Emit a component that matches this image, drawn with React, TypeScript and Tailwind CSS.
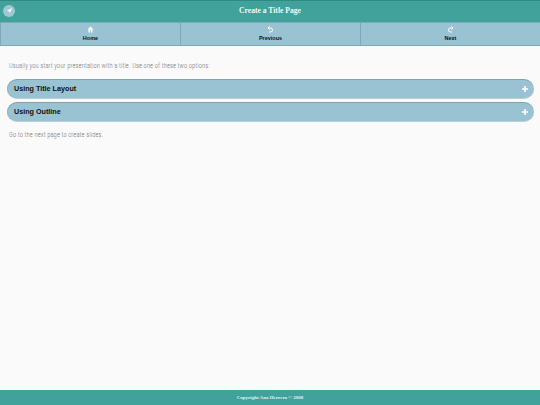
function Home() {
  return (
    <svg width="7" height="7" viewBox="0 0 14 14" fill="#fff" className="block">
      <path d="M7 1 1 7h2v6h3V9h2v4h3V7h2z" />
    </svg>
  );
}
function Undo() {
  return (
    <svg width="7" height="7" viewBox="0 0 14 14" fill="none" stroke="#fff" strokeWidth="2" className="block">
      <path d="M5 1 2 4l3 3M2 4h5a4 4 0 0 1 0 8H4" />
    </svg>
  );
}
function Redo() {
  return (
    <svg width="7" height="7" viewBox="0 0 14 14" fill="none" stroke="#fff" strokeWidth="2" className="block">
      <path d="M9 1l3 3-3 3M12 4H7a4 4 0 0 0 0 8h3" />
    </svg>
  );
}
function NavButton({ label, icon, border }: { label: string; icon: React.ReactNode; border?: boolean }) {
  return (
    <div className={`flex-1 flex flex-col items-center pt-[2px] ${border ? "border-l border-[#7fa9b8]" : ""}`}>
      <div className="h-[8px] flex items-center">{icon}</div>
      <div className="text-[5.5px] leading-[9px] mt-[1px] font-bold text-[#111] font-['Liberation_Sans',sans-serif]">{label}</div>
    </div>
  );
}
function Row({ label }: { label: string }) {
  return (
    <div className="h-[20px] rounded-[10px] bg-[#99c3d3] border-t border-t-[#7fa3ae] border-b border-b-[#b9cfd8] flex items-center justify-between pl-[7.5px] pr-[6px] shadow-[inset_1px_0_0_#8fb4c2]">
      <span className="text-[7.2px] font-bold text-[#111] font-['Liberation_Sans',sans-serif]">{label}</span>
      <svg width="6" height="6" viewBox="0 0 6 6" fill="#fff"><path d="M2.2 0h1.6v2.2H6v1.6H3.8V6H2.2V3.8H0V2.2h2.2z" /></svg>
    </div>
  );
}
export default function App() {
  return (
    <div className="w-[540px] h-[405px] flex flex-col bg-[#fafafa] overflow-hidden antialiased">
      <div className="h-[22px] shrink-0 bg-[#40a29b] border-t border-t-[#2f8a84] flex items-center px-[3px] pb-[2px]">
        <div className="w-[12px] h-[12px] rounded-full bg-[#a0c8d4] flex items-center justify-center">
          <svg width="7" height="7" viewBox="0 0 8 8" fill="#fff"><path d="M7 1 1 4.2l2.6.6L4.2 7.2z" /></svg>
        </div>
        <div className="flex-1 text-center pr-[12px] text-[7.6px] font-bold text-[#f2f7f6] font-['Liberation_Serif',serif]">Create a Title Page</div>
      </div>
      <div className="h-[24px] shrink-0 bg-[#99c3d3] border-y border-[#7fa9b8] border-l flex">
        <NavButton label="Home" icon={<Home />} />
        <NavButton label="Previous" icon={<Undo />} border />
        <NavButton label="Next" icon={<Redo />} border />
      </div>
      <main className="flex-1 px-[6.5px] pt-[16px]">
        <p className="pl-[2.5px] text-[6.5px] leading-[9px] tracking-[0.1px] [font-stretch:75%] text-[#777777] font-['Roboto',sans-serif] font-light">
          Usually you start your presentation with a title. Use one of these two options:
        </p>
        <div className="mt-[8px] flex flex-col gap-[3px]">
          <Row label="Using Title Layout" />
          <Row label="Using Outline" />
        </div>
        <p className="mt-[9px] pl-[2.5px] text-[6.5px] leading-[9px] tracking-[0.1px] [font-stretch:75%] text-[#777777] font-['Roboto',sans-serif] font-light">
          Go to the next page to create slides.
        </p>
      </main>
      <div className="h-[15px] shrink-0 bg-[#40a29b] flex items-center justify-center text-[5px] font-bold text-[#e6f0ef] font-['Liberation_Serif',serif]">
        Copyright Ana Herrera © 2008
      </div>
    </div>
  );
}
